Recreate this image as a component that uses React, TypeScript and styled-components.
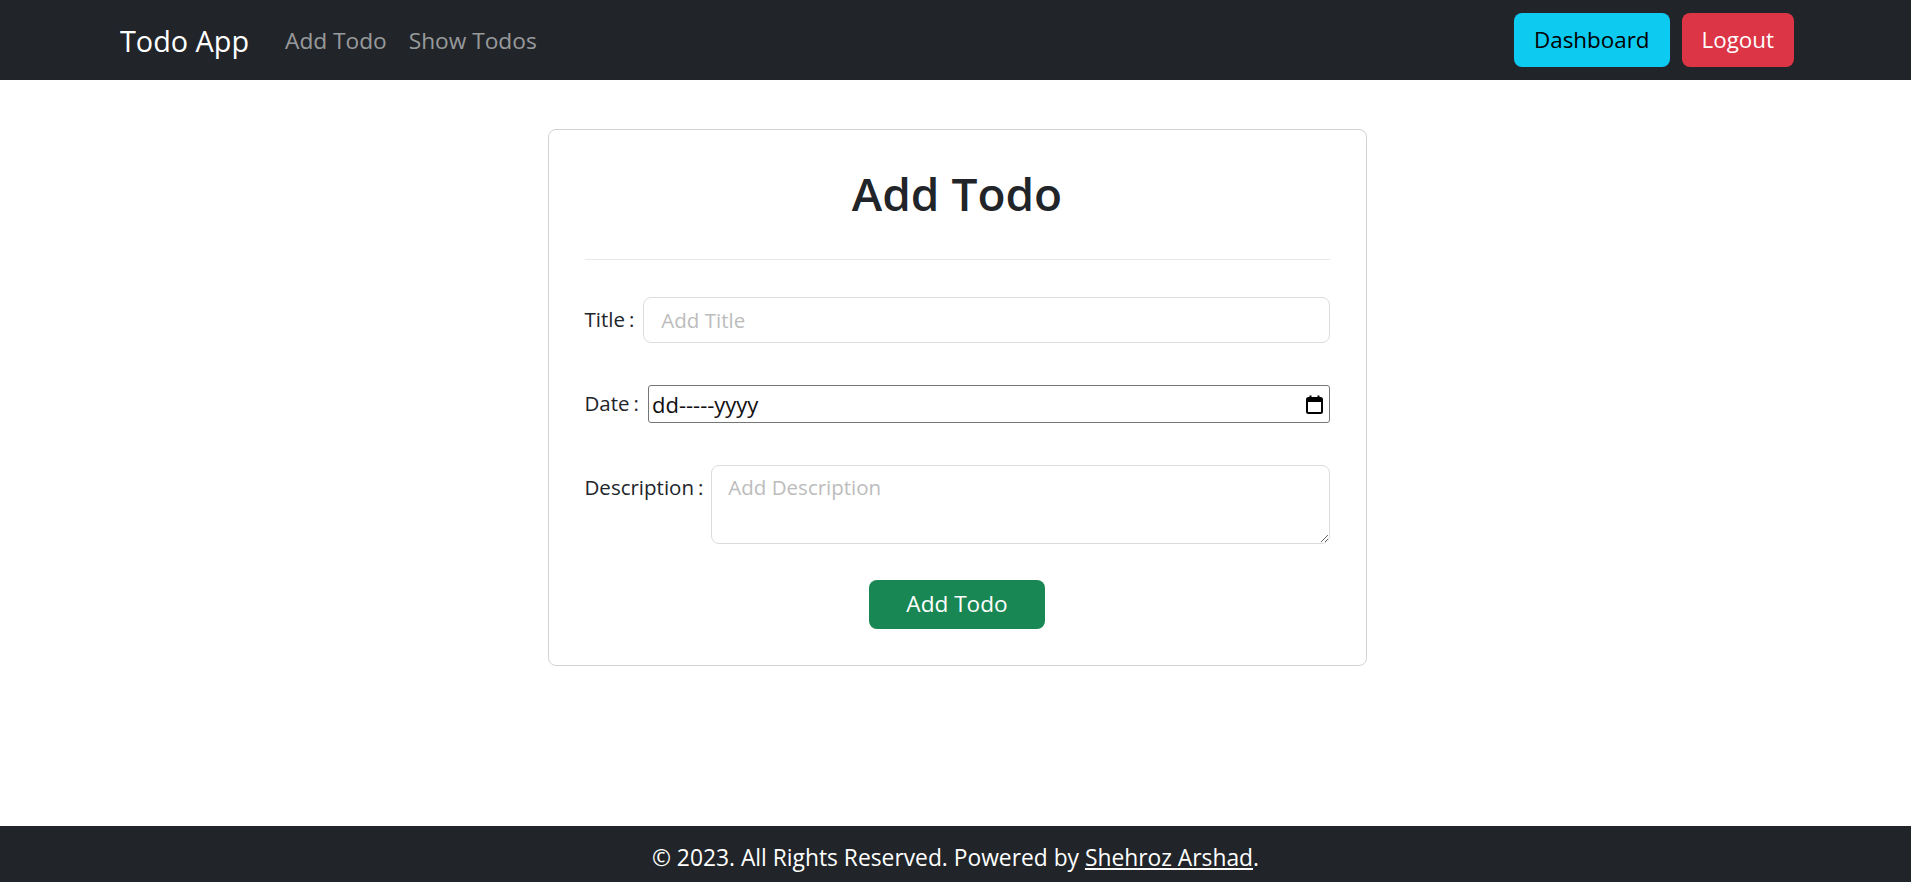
import React from "react";
import styled, { createGlobalStyle } from "styled-components";

const GlobalStyle = createGlobalStyle`
  * {
    box-sizing: border-box;
  }
  body {
    margin: 0;
    font-family: "Open Sans", "Noto Sans", sans-serif;
    font-size: 22px;
    color: #212529;
    background: #fff;
  }
`;

const Page = styled.div`
  min-height: 100vh;
  display: flex;
  flex-direction: column;
`;

const Navbar = styled.nav`
  height: 80px;
  background: #212529;
  display: flex;
  align-items: center;
  justify-content: space-between;
  padding: 0 117px 0 120px;
`;

const NavLeft = styled.div`
  display: flex;
  align-items: center;
`;

const Brand = styled.a`
  font-size: 28.8px;
  color: #fff;
  text-decoration: none;
  margin-right: 25px;
`;

const NavLink = styled.a`
  font-size: 22.7px;
  color: rgba(255, 255, 255, 0.55);
  text-decoration: none;
  padding: 0 11px;
`;

const NavRight = styled.div`
  display: flex;
  gap: 12px;
`;

const NavButton = styled.button<{ $bg: string; $fg: string }>`
  font-family: inherit;
  font-size: 22.4px;
  line-height: 33.6px;
  padding: 10px 20px;
  border: none;
  border-radius: 8px;
  background: ${(p) => p.$bg};
  color: ${(p) => p.$fg};
`;

const Main = styled.main`
  flex: 1;
  display: flex;
  justify-content: center;
  align-items: flex-start;
  padding-top: 49px;
  padding-left: 3px;
`;

const Card = styled.div`
  width: 819px;
  border: 1px solid rgba(0, 0, 0, 0.175);
  border-radius: 8px;
  padding: 36px;
`;

const Heading = styled.h2`
  margin: 0 0 38px;
  font-size: 46px;
  font-weight: 600;
  line-height: 55px;
  text-align: center;
`;

const Divider = styled.hr`
  margin: 0 0 37px;
  border: none;
  border-top: 1px solid #e9e9e9;
`;

const Row = styled.div<{ $mb: number; $align?: string }>`
  display: flex;
  align-items: ${(p) => p.$align || "center"};
  margin-bottom: ${(p) => p.$mb}px;
`;

const Label = styled.label<{ $gap: number; $top?: number }>`
  font-size: 20.5px;
  line-height: 33.6px;
  white-space: nowrap;
  margin-right: ${(p) => p.$gap}px;
  margin-top: ${(p) => p.$top || 0}px;
`;

const Colon = styled.span`
  margin-left: 4px;
`;

const TextInput = styled.input`
  flex: 1;
  height: 46px;
  font-family: inherit;
  font-size: 20.5px;
  padding: 5px 17px;
  border: 1px solid #dcdcdc;
  border-radius: 8px;
  outline: none;
  &::placeholder {
    color: #bcbcbc;
  }
`;

const DateBox = styled.div`
  flex: 1;
  height: 38px;
  display: flex;
  align-items: center;
  justify-content: space-between;
  padding: 0 6px 0 3px;
  border: 1px solid #767676;
  border-radius: 3px;
  font-size: 22px;
  color: #111;
`;

const TextArea = styled.textarea`
  flex: 1;
  height: 79px;
  font-family: inherit;
  font-size: 20.5px;
  line-height: 33.6px;
  padding: 5px 16px;
  border: 1px solid #dcdcdc;
  border-radius: 8px;
  outline: none;
  resize: vertical;
  &::placeholder {
    color: #bcbcbc;
  }
`;

const Center = styled.div`
  display: flex;
  justify-content: center;
`;

const SubmitButton = styled.button`
  font-family: inherit;
  font-size: 22.6px;
  line-height: 33.6px;
  padding: 7px 37px 8px;
  border: none;
  border-radius: 8px;
  background: #198754;
  color: #fff;
`;

const Footer = styled.footer`
  height: 56px;
  background: #212529;
  color: #fff;
  text-align: center;
  font-size: 22.8px;
  line-height: 33.6px;
  padding-top: 15px;
  a {
    color: #fff;
    text-decoration: underline;
  }
`;

const CalendarIcon = () => (
  <svg width="17" height="19" viewBox="0 0 17 19">
    <rect x="1" y="3" width="15" height="15" rx="1.5" fill="none" stroke="#000" strokeWidth="2" />
    <rect x="1" y="3" width="15" height="4" fill="#000" />
    <rect x="3.5" y="0.5" width="2" height="3" fill="#000" />
    <rect x="11.5" y="0.5" width="2" height="3" fill="#000" />
  </svg>
);

export default function App() {
  return (
    <Page>
      <GlobalStyle />
      <Navbar>
        <NavLeft>
          <Brand href="#">Todo App</Brand>
          <NavLink href="#">Add Todo</NavLink>
          <NavLink href="#">Show Todos</NavLink>
        </NavLeft>
        <NavRight>
          <NavButton $bg="#0dcaf0" $fg="#000">Dashboard</NavButton>
          <NavButton $bg="#dc3545" $fg="#fff">Logout</NavButton>
        </NavRight>
      </Navbar>
      <Main>
        <Card>
          <Heading>Add Todo</Heading>
          <Divider />
          <Row $mb={42}>
            <Label $gap={9}>Title<Colon>:</Colon></Label>
            <TextInput placeholder="Add Title" />
          </Row>
          <Row $mb={42}>
            <Label $gap={9}>Date<Colon>:</Colon></Label>
            <DateBox>
              <span>dd-----yyyy</span>
              <CalendarIcon />
            </DateBox>
          </Row>
          <Row $mb={36} $align="flex-start">
            <Label $gap={8} $top={6}>Description<Colon>:</Colon></Label>
            <TextArea placeholder="Add Description" />
          </Row>
          <Center>
            <SubmitButton>Add Todo</SubmitButton>
          </Center>
        </Card>
      </Main>
      <Footer>
        © 2023. All Rights Reserved. Powered by <a href="#">Shehroz Arshad</a>.
      </Footer>
    </Page>
  );
}
